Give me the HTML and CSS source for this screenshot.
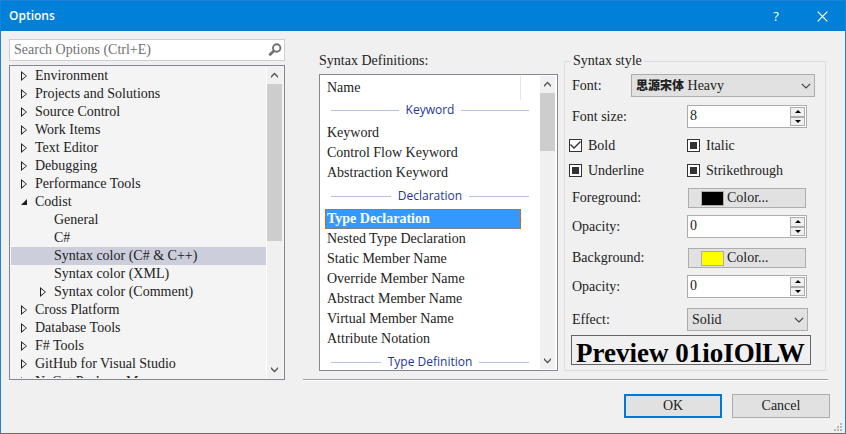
FILE: index.html
```html
<!DOCTYPE html>
<html lang="en">
<head>
<meta charset="utf-8">
<title>Options</title>
<link rel="stylesheet" href="styles.css">
</head>
<body>
<div class="window">
  <header class="titlebar">
    <h1>Options</h1>
    <button class="caption" type="button" aria-label="Help">?</button>
    <button class="caption" type="button" aria-label="Close">
      <svg width="11" height="11" viewBox="0 0 11 11"><path d="M.7.7l9.6 9.6M10.3.7L.7 10.3" stroke="#fff" stroke-width="1.2"/></svg>
    </button>
  </header>

  <main class="content">
    <nav class="sidebar">
      <div class="search">
        <input type="search" aria-label="Search Options" placeholder="Search Options (Ctrl+E)">
        <svg width="14" height="14" viewBox="0 0 14 14" fill="none" stroke="#717171"><circle cx="8.7" cy="5" r="3.7" stroke-width="1.9"/><path d="M6 7.8L1.3 12.3" stroke-width="2.6"/></svg>
      </div>
      <div class="tree">
        <ul>
          <li class="closed">Environment</li>
          <li class="closed">Projects and Solutions</li>
          <li class="closed">Source Control</li>
          <li class="closed">Work Items</li>
          <li class="closed">Text Editor</li>
          <li class="closed">Debugging</li>
          <li class="closed">Performance Tools</li>
          <li class="open">Codist</li>
          <li class="child">General</li>
          <li class="child">C#</li>
          <li class="child selected">Syntax color (C# &amp; C++)</li>
          <li class="child">Syntax color (XML)</li>
          <li class="child closed">Syntax color (Comment)</li>
          <li class="closed">Cross Platform</li>
          <li class="closed">Database Tools</li>
          <li class="closed">F# Tools</li>
          <li class="closed">GitHub for Visual Studio</li>
          <li class="closed">NuGet Package Manager</li>
        </ul>
        <div class="scrollbar">
          <svg width="15" height="17" viewBox="0 0 15 17"><path d="M4 11V9l3.500-3.500L11 9v2L7.500 7.500z" fill="#555"/></svg>
          <div class="thumb thumb-tree"></div>
          <svg class="down" width="15" height="17" viewBox="0 0 15 17"><path d="M4 6v2l3.500 3.500L11 8V6L7.500 9.500z" fill="#555"/></svg>
        </div>
      </div>
    </nav>

    <section class="page">
      <div class="definitions">
        <h2>Syntax Definitions:</h2>
        <div class="list">
          <div class="rows">
            <div class="column-head">Name</div>
            <div class="group">Keyword</div>
            <ul>
              <li>Keyword</li>
              <li>Control Flow Keyword</li>
              <li>Abstraction Keyword</li>
            </ul>
            <div class="group">Declaration</div>
            <ul>
              <li class="current">Type Declaration</li>
              <li>Nested Type Declaration</li>
              <li>Static Member Name</li>
              <li>Override Member Name</li>
              <li>Abstract Member Name</li>
              <li>Virtual Member Name</li>
              <li>Attribute Notation</li>
            </ul>
            <div class="group">Type Definition</div>
          </div>
          <div class="scrollbar">
            <svg width="15" height="17" viewBox="0 0 15 17"><path d="M4 11V9l3.500-3.500L11 9v2L7.500 7.500z" fill="#555"/></svg>
            <div class="thumb thumb-list"></div>
            <svg class="down" width="15" height="17" viewBox="0 0 15 17"><path d="M4 6v2l3.500 3.500L11 8V6L7.500 9.500z" fill="#555"/></svg>
          </div>
        </div>
      </div>

      <fieldset class="style">
        <legend>Syntax style</legend>
        <div class="row">
          <label class="short" for="font">Font:</label>
          <div class="select wide">
            <select id="font"><button><selectedcontent></selectedcontent></button><option><span class="cjk">思源宋体</span> Heavy</option></select>
            <svg width="10" height="6" viewBox="0 0 10 6"><path d="M.8.8L5 5 9.200.8" fill="none" stroke="#444" stroke-width="1.200"/></svg>
          </div>
        </div>
        <div class="row size-row">
          <label for="size">Font size:</label>
          <div class="spin">
            <input id="size" type="text" inputmode="numeric" value="8">
            <div class="steps"><button type="button" aria-label="Increase font size"></button><button type="button" aria-label="Decrease font size"></button></div>
          </div>
        </div>
        <div class="checks">
          <label><input type="checkbox" checked>Bold</label>
          <label><input type="checkbox" class="mixed">Italic</label>
          <label><input type="checkbox" class="mixed">Underline</label>
          <label><input type="checkbox" class="mixed">Strikethrough</label>
        </div>
        <div class="row color-row">
          <label for="fore">Foreground:</label>
          <button class="color" id="fore" type="button"><span class="swatch black"></span>Color...</button>
        </div>
        <div class="row opacity-row">
          <label for="fore-opacity">Opacity:</label>
          <div class="spin">
            <input id="fore-opacity" type="text" inputmode="numeric" value="0">
            <div class="steps"><button type="button" aria-label="Increase foreground opacity"></button><button type="button" aria-label="Decrease foreground opacity"></button></div>
          </div>
        </div>
        <div class="row color-row">
          <label for="back">Background:</label>
          <button class="color" id="back" type="button"><span class="swatch yellow"></span>Color...</button>
        </div>
        <div class="row opacity-row">
          <label for="back-opacity">Opacity:</label>
          <div class="spin">
            <input id="back-opacity" type="text" inputmode="numeric" value="0">
            <div class="steps"><button type="button" aria-label="Increase background opacity"></button><button type="button" aria-label="Decrease background opacity"></button></div>
          </div>
        </div>
        <div class="row">
          <label for="effect">Effect:</label>
          <div class="select">
            <select id="effect"><option>Solid</option></select>
            <svg width="10" height="6" viewBox="0 0 10 6"><path d="M.8.8L5 5 9.200.8" fill="none" stroke="#444" stroke-width="1.200"/></svg>
          </div>
        </div>
        <div class="preview">Preview 01ioIOlLW</div>
      </fieldset>
    </section>
  </main>

  <footer class="actions">
    <button class="primary" type="button">OK</button>
    <button type="button">Cancel</button>
  </footer>
  <svg class="grip" width="8" height="8" viewBox="0 0 8 8" fill="#b8b8b8"><path d="M6 0h2v2H6zM3 3h2v2H3zM6 3h2v2H6zM0 6h2v2H0zM3 6h2v2H3zM6 6h2v2H6z"/></svg>
</div>
</body>
</html>
```
FILE: styles.css
```css
* {
  box-sizing: border-box;
}

body {
  margin: 0;
  background: #f0f0f0;
  color: #222;
  font: 14px/16px "Liberation Serif", "Noto Sans CJK SC", serif;
}

button,
input,
select {
  margin: 0;
  color: inherit;
  font: inherit;
}

h1,
h2,
ul {
  margin: 0;
  padding: 0;
  font: inherit;
  list-style: none;
}

svg {
  display: block;
  flex: none;
}

.window {
  position: relative;
  display: flex;
  flex-direction: column;
  min-height: 100vh;
  border: 1px solid #1883d7;
}

/* Title bar */

.titlebar {
  display: flex;
  align-items: center;
  height: 30px;
  padding-left: 8px;
  background: #0180d9;
  color: #fff;
  font: 600 12px/18px "Open Sans", sans-serif;
}

.titlebar h1 {
  flex: 1;
}

.caption {
  display: flex;
  align-items: center;
  justify-content: center;
  width: 46px;
  height: 30px;
  padding: 0;
  border: 0;
  background: none;
  font-size: 13px;
  font-weight: 400;
}

/* Page frame */

.content {
  display: grid;
  grid-template-columns: 276px 1fr;
  gap: 18px;
  padding: 8px 17px 0 8px;
}

.sidebar {
  display: flex;
  flex-direction: column;
  gap: 4px;
}

.search {
  display: flex;
  align-items: center;
  height: 22px;
  padding: 0 2px 0 4px;
  border: 1px solid #cccedb;
  background: #fff;
}

.search input {
  flex: 1;
  min-width: 0;
  padding: 0;
  border: 0;
  background: none;
}

.search input::placeholder {
  color: #717171;
}

/* Scrolling panes take their height from the neighbouring form */

.tree,
.list {
  display: flex;
  flex: 1;
  contain: size;
  overflow: hidden;
  padding: 1px;
  border: 1px solid #828790;
}

.tree {
  padding-right: 2px;
  background: #f4f4f4;
}

.tree ul {
  flex: 1;
  overflow: hidden;
}

.tree li {
  display: flex;
  align-items: center;
  height: 18px;
  padding-left: 24px;
}

.tree .child {
  padding-left: 43px;
}

.closed::before,
.open::before {
  content: "";
  width: 6px;
  height: 10px;
  margin: 0 8px 0 -14px;
  background: #1e1e1e;
  clip-path: polygon(0 0, 100% 50%, 0 100%, 0 0, 1px 2px, 1px 8px, 5px 5px, 1px 2px);
}

.open::before {
  clip-path: polygon(100% 20%, 100% 80%, 0 80%);
}

.tree .selected {
  background: #cccedb;
}

.scrollbar {
  display: flex;
  flex-direction: column;
  width: 16px;
  border-left: 1px solid #fff;
  background: #f0f0f0;
}

.thumb {
  background: #cdcdcd;
}

.thumb-tree {
  height: 157px;
}

.thumb-list {
  height: 58px;
}

.down {
  margin-top: auto;
}

/* Definitions list */

.page {
  display: grid;
  grid-template-columns: 1fr 262px;
  gap: 6px;
  padding: 14px 2px 8px 16px;
  border-bottom: 1px solid #a0a0a0;
  box-shadow: 0 1px #fff;
}

.definitions {
  display: flex;
  flex-direction: column;
  gap: 5px;
}

.list {
  padding-right: 2px;
  background: #fff;
}

.rows {
  flex: 1;
  overflow: hidden;
  padding-left: 4px;
}

.column-head {
  height: 24px;
  margin-right: 18px;
  padding-left: 2px;
  border-right: 1px solid #e5e5e5;
  line-height: 24px;
}

.group {
  display: flex;
  align-items: center;
  gap: 7px;
  height: 20px;
  margin: 3px 10px 3px 6px;
  color: #1e3796;
  font: 12px/20px "Open Sans", sans-serif;
}

.column-head + .group {
  margin-top: 0;
}

.group::before,
.group::after {
  content: "";
  flex: 1;
  height: 1px;
  background: #b5c2e2;
}

.rows li {
  height: 20px;
  margin-right: 18px;
  padding-left: 2px;
  line-height: 20px;
}

.rows .current {
  border: 1px dotted #cc6600;
  padding-left: 1px;
  background: #3399ff;
  color: #fff;
  font-weight: bold;
  line-height: 18px;
}

/* Style form */

.style {
  min-width: 0;
  margin: 0;
  padding: 5px 10px 5px 6px;
  border: 1px solid #dcdcdc;
}

.style legend {
  padding: 0 2px;
}

.row {
  display: flex;
  align-items: center;
}

.row label {
  flex: none;
  width: 116px;
  padding-left: 1px;
}

.row .short {
  width: 60px;
}

.size-row {
  margin: 8px 0 5px;
}

.color-row {
  margin-bottom: 7px;
}

.opacity-row {
  margin-bottom: 10px;
}

.select {
  position: relative;
  width: 121px;
}

.select.wide {
  width: 185px;
}

.select select {
  display: block;
  width: 100%;
  height: 23px;
  min-height: 0;
  padding: 0 4px;
  border: 1px solid #adadad;
  border-radius: 0;
  appearance: none;
  background: #e1e1e1;
}

.select.wide select {
  appearance: base-select;
  line-height: 21px;
}

.select select::picker-icon {
  display: none;
}

.cjk {
  font: 900 12px "Noto Sans CJK SC", sans-serif;
}

.select svg {
  position: absolute;
  top: 9px;
  right: 4px;
  pointer-events: none;
}

.spin {
  display: flex;
  width: 120px;
  height: 23px;
  padding: 1px;
  border: 1px solid #abadb3;
  background: #fff;
}

.spin input {
  flex: 1;
  min-width: 0;
  padding: 0 0 2px 1px;
  border: 0;
  background: none;
}

.steps {
  display: grid;
  grid-template-rows: 1fr 1fr;
  width: 15px;
}

.steps button {
  display: flex;
  align-items: center;
  justify-content: center;
  padding: 0;
  border: 1px solid #adadad;
  background: #f0f0f0;
}

.steps button::before {
  content: "";
  border: 3px solid transparent;
  border-top: 0;
  border-bottom-color: #000;
}

.steps button + button::before {
  border-top: 3px solid #000;
  border-bottom: 0;
}

.checks {
  display: grid;
  grid-template-columns: 118px 1fr;
  grid-auto-rows: 25px;
  margin: 0 0 5px -2px;
}

.checks label {
  display: flex;
  align-items: center;
  gap: 6px;
}

.checks input {
  width: 13px;
  height: 13px;
  border: 1px solid #333;
  appearance: none;
  background: #fff;
}

.checks input:checked {
  display: grid;
  place-items: center;
}

.checks input:checked::before {
  content: "";
  width: 11px;
  height: 9px;
  background: #333;
  clip-path: polygon(0 4px, 1px 3px, 4px 6px, 10px 0, 11px 1px, 4px 8px);
}

.checks .mixed {
  padding: 2px;
  background: #333 content-box;
  box-shadow: inset 0 0 0 2px #fff;
}

.color {
  display: flex;
  align-items: center;
  gap: 3px;
  width: 118px;
  height: 20px;
  margin-left: 1px;
  padding: 0 12px;
  border: 1px solid #adadad;
  background: #e1e1e1;
}

.swatch {
  width: 23px;
  height: 15px;
  border: 1px solid #adadad;
}

.black {
  background: #000;
}

.yellow {
  background: #ff0;
}

.preview {
  height: 30px;
  margin-top: 4px;
  margin-right: 4px;
  padding: 0 4px;
  overflow: hidden;
  border: 1px solid #646464;
  color: #000;
  font: bold 27px/34px "Liberation Serif", serif;
  white-space: nowrap;
}

/* Footer */

.actions {
  display: flex;
  justify-content: flex-end;
  gap: 10px;
  padding: 14px 15px 15px 0;
}

.actions button {
  width: 98px;
  height: 24px;
  padding: 0;
  border: 1px solid #adadad;
  background: #e1e1e1;
}

.actions .primary {
  border: 2px solid #0078d7;
}

.grip {
  position: absolute;
  right: 3px;
  bottom: 2px;
}
```
